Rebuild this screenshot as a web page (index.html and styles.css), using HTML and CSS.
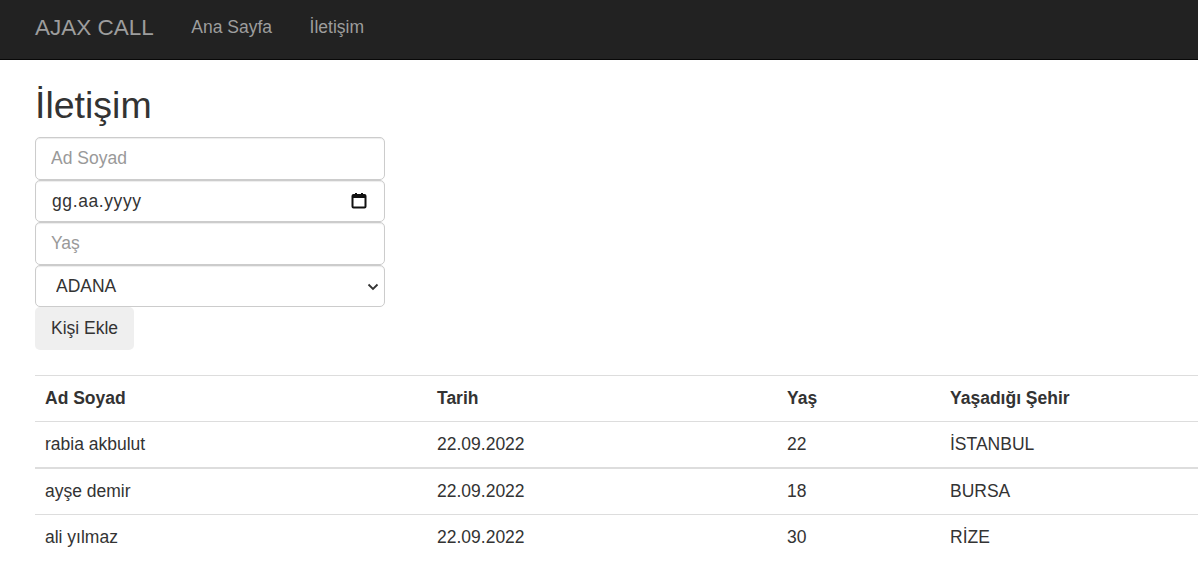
FILE: index.html
```html
<!DOCTYPE html>
<html lang="tr">
<head>
<meta charset="utf-8">
<title>İletişim - AJAX CALL</title>
<link rel="stylesheet" href="styles.css">
</head>
<body>
<nav class="navbar">
  <a class="brand" href="#">AJAX CALL</a>
  <ul class="nav">
    <li><a href="#">Ana Sayfa</a></li>
    <li><a href="#">İletişim</a></li>
  </ul>
</nav>
<main class="content">
  <h2 class="title">İletişim</h2>
  <form class="form">
    <input class="form-control" type="text" placeholder="Ad Soyad">
    <div class="form-control date-control">
      <span class="date-text">gg.aa.yyyy</span>
      <svg class="cal-icon" width="16" height="17" viewBox="0 0 16 17" aria-hidden="true">
        <rect x="1.5" y="3" width="13" height="12.5" rx="1" fill="none" stroke="#111" stroke-width="2"/>
        <rect x="1.5" y="3" width="13" height="3" fill="#111"/>
        <rect x="4" y="1" width="2" height="3" fill="#111"/>
        <rect x="10" y="1" width="2" height="3" fill="#111"/>
      </svg>
    </div>
    <input class="form-control" type="text" placeholder="Yaş">
    <div class="select-wrap">
      <select class="form-control select">
        <option>ADANA</option>
        <option>BURSA</option>
        <option>İSTANBUL</option>
        <option>RİZE</option>
      </select>
      <svg class="chev" width="12" height="8" viewBox="0 0 12 8" aria-hidden="true">
        <path d="M1.5 1.5 L6 6 L10.5 1.5" fill="none" stroke="#333" stroke-width="1.8"/>
      </svg>
    </div>
    <button class="btn" type="button">Kişi Ekle</button>
  </form>
  <table class="table">
    <colgroup>
      <col class="c1"><col class="c2"><col class="c3"><col class="c4">
    </colgroup>
    <thead>
      <tr><th>Ad Soyad</th><th>Tarih</th><th>Yaş</th><th>Yaşadığı Şehir</th></tr>
    </thead>
    <tbody>
      <tr class="first"><td>rabia akbulut</td><td>22.09.2022</td><td>22</td><td>İSTANBUL</td></tr>
      <tr><td>ayşe demir</td><td>22.09.2022</td><td>18</td><td>BURSA</td></tr>
      <tr><td>ali yılmaz</td><td>22.09.2022</td><td>30</td><td>RİZE</td></tr>
    </tbody>
  </table>
</main>
</body>
</html>
```

FILE: styles.css
```css
* { box-sizing: border-box; }

html, body {
  margin: 0;
  padding: 0;
  overflow-x: hidden;
}

body {
  font-family: "Liberation Sans", Arial, Helvetica, sans-serif;
  font-size: 17.5px;
  line-height: 25px;
  color: #333;
  background: #fff;
}

.navbar {
  display: flex;
  align-items: center;
  height: 60px;
  background: #222;
  border-bottom: 1px solid #080808;
  padding-left: 35px;
}

.brand {
  font-size: 22.5px;
  line-height: 25px;
  color: #9d9d9d;
  text-decoration: none;
  padding-right: 18.75px;
  padding-bottom: 4px;
}

.nav {
  display: flex;
  list-style: none;
  margin: 0;
  padding: 0;
}

.nav a {
  display: block;
  padding: 0 18.75px;
  color: #9d9d9d;
  text-decoration: none;
  font-size: 17.5px;
  line-height: 25px;
  padding-bottom: 4px;
}

.content {
  padding-left: 35px;
}

.title {
  margin: 25px 0 11px;
  font-size: 37.5px;
  line-height: 41px;
  font-weight: 500;
  color: #333;
}

.form {
  display: flex;
  flex-direction: column;
  width: 350px;
}

.form-control {
  display: block;
  width: 350px;
  height: 42.5px;
  padding: 7.5px 15px;
  font-family: inherit;
  font-size: 17.5px;
  line-height: 25px;
  color: #333;
  background: #fff;
  border: 1px solid #ccc;
  border-radius: 5px;
  box-shadow: inset 0 1px 1px rgba(0,0,0,.075);
  margin: 0;
}

.form-control::placeholder { color: #999; }

.date-control {
  display: flex;
  align-items: center;
  justify-content: space-between;
  padding-left: 16px;
  padding-right: 17px;
}

.date-text {
  color: #333;
  letter-spacing: 0.6px;
  position: relative;
  top: 1px;
}

.cal-icon { display: block; }

.select-wrap {
  position: relative;
}

.select {
  appearance: none;
  -webkit-appearance: none;
  padding-left: 20px;
  padding-top: 8.5px;
  padding-bottom: 6.5px;
}

.chev {
  position: absolute;
  right: 6px;
  top: 18px;
  pointer-events: none;
}

.btn {
  align-self: flex-start;
  height: 42.5px;
  padding: 7.5px 16px;
  font-family: inherit;
  font-size: 17.5px;
  line-height: 25px;
  color: #333;
  background: #efefef;
  border: none;
  border-radius: 5px;
}

.table {
  margin-top: 25.5px;
  width: 1163px;
  border-collapse: collapse;
  border-spacing: 0;
}

.c1 { width: 392px; }
.c2 { width: 350px; }
.c3 { width: 163px; }

.table th,
.table td {
  padding: 10px;
  text-align: left;
  vertical-align: top;
  line-height: 25px;
  border-top: 1px solid #ddd;
}

.table th {
  font-weight: bold;
}

.table tr.first td {
  border-top: 1px solid #ddd;
}

.table tbody tr:nth-child(2) td {
  border-top: 2px solid #ddd;
}
```
